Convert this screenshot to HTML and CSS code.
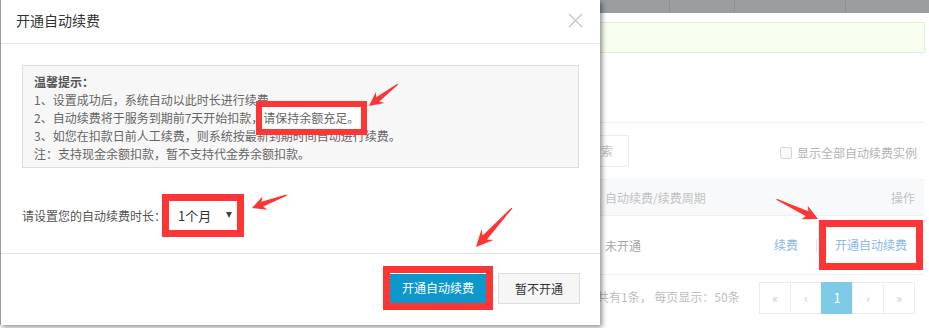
FILE: index.html
```html
<!DOCTYPE html>
<html lang="zh-CN">
<head>
<meta charset="utf-8">
<title>开通自动续费</title>
<link rel="stylesheet" href="styles.css">
</head>
<body>
<div class="page">
  <div class="topbar">
    <span class="tb tb1"></span><span class="tb tb2"></span><span class="tb tb3"></span><span class="tb tb4"></span>
  </div>
  <div class="alert"></div>
  <div class="rule"></div>
  <div class="toolbar">
    <div class="filters">
      <span class="fake-input"></span>
      <span class="search-btn">搜索</span>
    </div>
    <label class="showall"><span class="cb"></span>显示全部自动续费实例</label>
  </div>
  <div class="table">
    <div class="thead">
      <span class="c-first"></span>
      <span class="c-status">自动续费/续费周期</span>
      <span class="c-ops">操作</span>
    </div>
    <div class="trow">
      <span class="c-first"></span>
      <span class="c-status">未开通</span>
      <span class="c-ops ops"><a class="link">续费</a><i class="sep"></i><a class="link hl-link">开通自动续费</a></span>
    </div>
    <div class="tfoot">
      <span class="total">共有1条， 每页显示：50条</span>
      <div class="pager">
        <span class="pg">«</span><span class="pg">‹</span><span class="pg active">1</span><span class="pg">›</span><span class="pg">»</span>
      </div>
    </div>
  </div>
</div>

<div class="modal">
  <div class="m-head">
    <span class="m-title">开通自动续费</span>
    <svg class="close" width="15" height="15" viewBox="0 0 15 15"><path d="M1 1 L14 14 M14 1 L1 14" stroke="#c4c4c4" stroke-width="1.4" fill="none"/></svg>
  </div>
  <div class="m-body">
    <div class="tip">
      <div class="tip-title">温馨提示：</div>
      <div>1、设置成功后，系统自动以此时长进行续费</div>
      <div>2、自动续费将于服务到期前7天开始扣款，<span class="hl-text">请保持余额充足。</span></div>
      <div>3、如您在扣款日前人工续费，则系统按最新到期时间自动进行续费。</div>
      <div>注：支持现金余额扣款，暂不支持代金券余额扣款。</div>
    </div>
    <div class="form-row">
      <span class="form-label">请设置您的自动续费时长：</span>
      <span class="select"><span class="sel-val">1个月</span><span class="sel-caret"></span></span>
    </div>
  </div>
  <div class="m-foot">
    <span class="btn btn-primary">开通自动续费</span>
    <span class="btn btn-default">暂不开通</span>
  </div>
</div>

<svg class="arrows" width="929" height="328" viewBox="0 0 929 328">
  <g fill="#fc3535">
    <polygon transform="translate(369 106) rotate(142.8)" points="0,0 -14,-7 -11,-2.6 -36,-0.6 -36,0.6 -11,2.6 -14,7"/>
    <polygon transform="translate(252 208) rotate(159.6)" points="0,0 -14,-7 -11,-2.6 -37,-0.6 -37,0.6 -11,2.6 -14,7"/>
    <polygon transform="translate(476 247) rotate(132.7)" points="0,0 -17,-8 -13,-3 -53,-0.6 -53,0.6 -13,3 -17,8"/>
    <polygon transform="translate(818 219) rotate(25.5)" points="0,0 -15,-7.5 -12,-2.8 -46,-0.6 -46,0.6 -12,2.8 -15,7.5"/>
  </g>
</svg>
</body>
</html>
```

FILE: styles.css
```css
* { box-sizing: border-box; }
html, body { margin: 0; padding: 0; }
body {
  width: 929px;
  height: 328px;
  overflow: hidden;
  position: relative;
  background: #fff;
  font-family: "Noto Sans CJK SC", "Microsoft YaHei", sans-serif;
  font-size: 12px;
  line-height: 18px;
}

/* ---------- background page ---------- */
.page {
  width: 929px;
  height: 328px;
  display: flex;
  flex-direction: column;
}
.topbar {
  height: 13px;
  background: #9a9ea1;
  display: flex;
}
.tb { height: 13px; border-right: 1px solid #8e9296; }
.tb1 { width: 670px; }
.tb2 { width: 65px; }
.tb3 { width: 111px; }
.tb4 { flex: 1; border-right: none; }

.alert {
  margin: 9px 4px 0 20px;
  height: 31px;
  background: #f8fff1;
  border: 1px solid #e2eed9;
}
.rule {
  margin: 69px 4px 0 20px;
  height: 1px;
  background: #efefef;
}
.toolbar {
  margin: 12px 12px 0 20px;
  height: 32px;
  display: flex;
  justify-content: space-between;
  align-items: center;
}
.filters { display: flex; height: 32px; }
.fake-input { width: 554px; height: 32px; }
.search-btn {
  width: 55px;
  height: 32px;
  border: 1px solid #ececec;
  color: #bdbdbd;
  padding-left: 14px;
  line-height: 30px;
  font-size: 12px;
}
.showall {
  display: flex;
  align-items: center;
  color: #b3b3b3;
  font-size: 12px;
  margin-top: 4px;
}
.cb {
  width: 12px;
  height: 12px;
  border: 1px solid #d6d6d6;
  border-radius: 2px;
  background: #fafafa;
  margin-right: 5px;
}

.table {
  margin: 12px 5px 0 20px;
  display: flex;
  flex-direction: column;
}
.thead, .trow {
  display: flex;
  align-items: center;
}
.thead {
  height: 36px;
  background: #f8f9fb;
  border-top: 1px solid #f1f2f4;
  color: #c2c2c2;
}
.trow {
  height: 60px;
  border-top: 1px solid #eef0f2;
  border-bottom: 1px solid #eef0f2;
  color: #a6a6a6;
}
.c-first { width: 585px; }
.c-status { flex: 1; }
.c-ops { padding-right: 9px; }
.trow .c-status { padding-top: 1px; }
.ops { display: flex; align-items: center; padding-right: 17px; }
.link { color: #8cb8e2; }
.sep {
  display: block;
  width: 1px;
  height: 13px;
  background: #e6e6e6;
  margin: 0 18px 0 18px;
}
.hl-link {
  background: #fff;
  outline: 7px solid #fc3535;
  outline-offset: 9px;
  position: relative;
}
.tfoot {
  height: 44px;
  display: flex;
  align-items: center;
  justify-content: space-between;
  padding-right: 9px;
  padding-left: 577px;
  color: #bdbdbd;
}
.pager { display: flex; height: 32px; margin-top: 2px; }
.pg {
  width: 32px;
  height: 32px;
  border: 1px solid #ececec;
  margin-left: -1px;
  display: flex;
  align-items: center;
  justify-content: center;
  color: #c9c9c9;
  font-size: 12px;
}
.pg.active {
  background: #7ecbe7;
  border-color: #7ecbe7;
  color: #fff;
  font-size: 13px;
}

/* ---------- modal ---------- */
.modal {
  position: absolute;
  left: 0;
  top: 0;
  width: 600px;
  height: 325px;
  background: #fff;
  border-left: 1px solid #9a9a9a;
  box-shadow: 2px 2px 5px rgba(0, 0, 0, 0.45);
  display: flex;
  flex-direction: column;
}
.m-head {
  height: 44px;
  border-bottom: 1px solid #e6e6e6;
  display: flex;
  align-items: center;
  justify-content: space-between;
  padding: 0 17px 3px 15px;
}
.m-title { font-size: 14px; color: #333; }
.close { display: block; margin-top: 1px; }

.m-body {
  padding: 21px 21px 16px 21px;
}
.tip {
  height: 103px;
  border: 1px solid #dcdcdc;
  background: #f7f7f7;
  padding: 7px 11px 0 11px;
  color: #666;
  font-size: 12px;
  line-height: 18px;
}
.tip-title { font-weight: bold; color: #555; }
.hl-text {
  background: #fff;
  outline: 6px solid #fc3535;
  outline-offset: 0px;
  padding: 2px 2px 3px 1px;
  margin-left: -1px;
}
.form-row {
  margin-top: 26px;
  height: 43px;
  display: flex;
  align-items: center;
  padding-left: 0;
}
.form-label { color: #555; font-size: 12px; padding-top: 1px; }
.select {
  width: 68px;
  height: 29px;
  margin-left: 3px;
  background: #fff;
  outline: 7px solid #fc3535;
  display: flex;
  align-items: center;
  justify-content: space-between;
  padding: 1px 5px 0 9px;
  color: #333;
  font-size: 13px;
}
.sel-caret {
  width: 0;
  height: 0;
  border-left: 3.5px solid transparent;
  border-right: 3.5px solid transparent;
  border-top: 6px solid #444;
  margin-top: -2px;
}

.m-foot {
  flex: 1;
  border-top: 1px solid #e3e3e3;
  display: flex;
  justify-content: flex-end;
  align-items: flex-start;
  padding: 19px 20px 0 0;
}
.btn {
  height: 30px;
  display: flex;
  align-items: center;
  justify-content: center;
  font-size: 12px;
}
.btn-primary {
  width: 96px;
  background: #0d98cb;
  color: #fff;
  outline: 7px solid #fc3535;
  box-shadow: inset 0 1px 0 #fff;
  margin-right: 12px;
}
.btn-default {
  width: 82px;
  height: 31px;
  background: #f6f6f6;
  border: 1px solid #dcdcdc;
  color: #333;
}

.arrows {
  position: absolute;
  left: 0;
  top: 0;
  pointer-events: none;
}
```
